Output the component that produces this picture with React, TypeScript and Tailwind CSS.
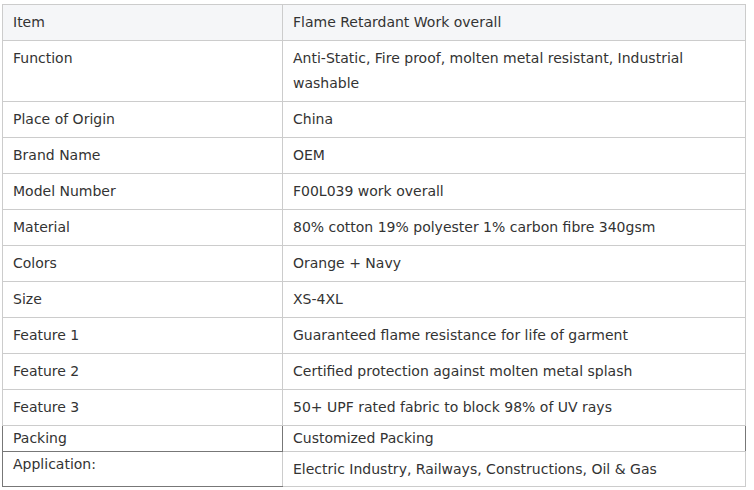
import React from "react";

const L = "border border-[#cccccc]";
const rows: [string, string][] = [
  ["Function", "Anti-Static, Fire proof, molten metal resistant, Industrial washable"],
  ["Place of Origin", "China"],
  ["Brand Name", "OEM"],
  ["Model Number", "F00L039 work overall"],
  ["Material", "80% cotton 19% polyester 1% carbon fibre 340gsm"],
  ["Colors", "Orange + Navy"],
  ["Size", "XS-4XL"],
  ["Feature 1", "Guaranteed flame resistance for life of garment"],
  ["Feature 2", "Certified protection against molten metal splash"],
  ["Feature 3", "50+ UPF rated fabric to block 98% of UV rays"],
];

export default function App() {
  return (
    <div className="bg-white w-[754px] h-[490px] pt-[4px] pl-[2px]" style={{ fontFamily: '"DejaVu Sans", Verdana, sans-serif' }}>
      <table className="border-collapse w-[744px] table-fixed text-[14px] leading-[25px] text-[#333333]">
        <colgroup>
          <col className="w-[280px]" />
          <col />
        </colgroup>
        <tbody>
          <tr className="bg-[#f5f6f8]">
            <td className={`${L} px-[10px] py-[5px] align-top`}>Item</td>
            <td className={`${L} px-[10px] py-[5px] align-top`}>Flame Retardant Work overall</td>
          </tr>
          {rows.map(([a, b]) => (
            <tr key={a}>
              <td className={`${L} px-[10px] py-[5px] align-top`}>{a}</td>
              <td className={`${L} px-[10px] py-[5px] align-top`}>{b}</td>
            </tr>
          ))}
          <tr>
            <td className="border border-[#777777] px-[10px] py-0 align-middle">Packing</td>
            <td className="border border-[#cccccc] border-r-[#777777] px-[10px] py-0 align-middle">Customized Packing</td>
          </tr>
          <tr>
            <td className="border border-[#777777] border-r-[#cccccc] px-[10px] py-0 align-top h-[35px]">Application:</td>
            <td className="border border-[#cccccc] px-[10px] py-0 align-middle">Electric Industry, Railways, Constructions, Oil &amp; Gas</td>
          </tr>
        </tbody>
      </table>
    </div>
  );
}
